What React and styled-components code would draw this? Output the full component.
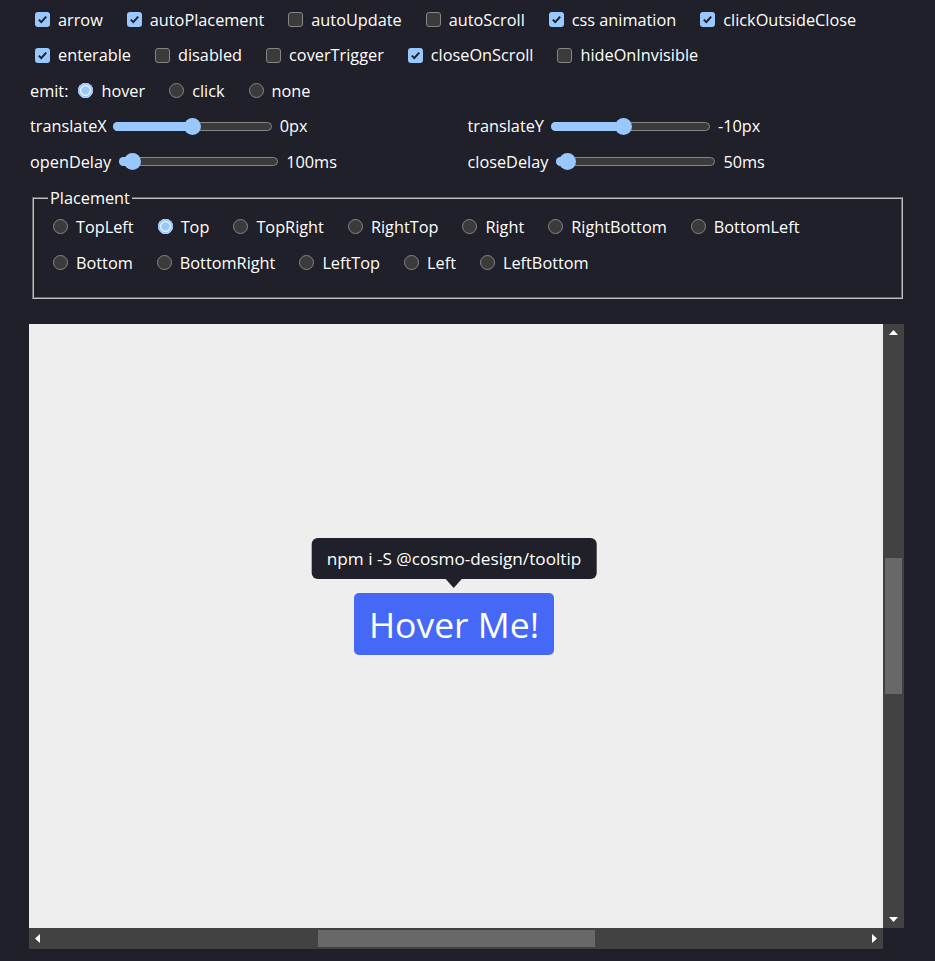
import React from 'react';
import styled, { createGlobalStyle, css } from 'styled-components';

const Global = createGlobalStyle`
  html, body { margin: 0; padding: 0; background: #1f2029; }
  body {
    font-family: "Open Sans", "Noto Sans", sans-serif;
    font-size: 16.3px;
    color: #ffffff;
  }
  * { box-sizing: border-box; }
`;

const Page = styled.div`
  width: 935px;
  height: 961px;
  padding: 2px 30px 0 30px;
  overflow: hidden;
`;

const Row = styled.div`
  display: flex;
  align-items: center;
  height: 35.5px;
  white-space: nowrap;
`;

const SliderGrid = styled.div`
  display: grid;
  grid-template-columns: 1fr 1fr;
`;

const Option = styled.label`
  display: flex;
  align-items: center;
  margin-right: 19px;
  line-height: 22px;
`;

const Box = styled.span`
  width: 15px;
  height: 15px;
  margin: 0 8px 0 5px;
  border-radius: 3px;
  display: inline-flex;
  align-items: center;
  justify-content: center;
  flex: none;
  ${(p) =>
    p.$on
      ? css`background: #99c8ff;`
      : css`background: #3b3b3b; border: 1px solid #858585;`}
`;

const Round = styled.span`
  width: 15px;
  height: 15px;
  margin: 0 8px 0 5px;
  border-radius: 50%;
  flex: none;
  ${(p) =>
    p.$on
      ? css`
          background: #99c8ff;
          box-shadow: inset 0 0 0 2px #99c8ff, inset 0 0 0 3.2px #eef5ff;
        `
      : css`background: #3b3b3b; border: 1px solid #858585;`}
`;

const Caption = styled.span`
  margin-right: ${(p) => p.$mr || 0}px;
  line-height: 22px;
`;

const Check = ({ label, on }) => (
  <Option>
    <Box $on={on}>
      {on && (
        <svg width="11" height="11" viewBox="0 0 11 11">
          <path d="M1.8 5.6 L4.3 8.1 L9.2 2.6" fill="none" stroke="#1e1f24" strokeWidth="2" />
        </svg>
      )}
    </Box>
    {label}
  </Option>
);

const Radio = ({ label, on }) => (
  <Option>
    <Round $on={on} />
    {label}
  </Option>
);

const SliderRow = styled.div`
  display: flex;
  align-items: center;
  height: 35.5px;
`;

const Track = styled.div`
  position: relative;
  width: 159px;
  height: 9px;
  margin: 0 8px 0 ${(p) => p.$ml}px;
  border-radius: 5px;
  background: #3b3b3b;
  border: 1px solid #858585;
`;

const Fill = styled.div`
  border-radius: 5px 0 0 5px;
  background: #99c8ff;
  margin: -1px 0 0 -1px;
  height: 9px;
`;

const Thumb = styled.div`
  position: absolute;
  top: 50%;
  width: 17px;
  height: 17px;
  margin: -8.5px 0 0 -8.5px;
  border-radius: 50%;
  background: #99c8ff;
`;

const Slider = ({ label, value, min, max, unit, ml }) => {
  const c = 8.5 + ((value - min) / (max - min)) * 142;
  return (
    <SliderRow>
      <span>{label}</span>
      <Track $ml={ml}>
        <Fill style={{ width: c }} />
        <Thumb style={{ left: c - 1 }} />
      </Track>
      <span>
        {value}
        {unit}
      </span>
    </SliderRow>
  );
};

const Fieldset = styled.fieldset`
  margin: 7px 2px 0 2px;
  padding: 0 14px 16px 14px;
  border: 2px groove #c0c0c0;
  min-width: 0;
`;

const Legend = styled.legend`
  padding: 0 2px;
  line-height: 22px;
`;

const Wrap = styled.div`
  display: flex;
  flex-wrap: wrap;
  white-space: nowrap;
`;

const WrapItem = styled.div`
  height: 36px;
  display: flex;
  align-items: center;
`;

const Stage = styled.div`
  margin: 25px 0 0 -1px;
  width: 875px;
  display: grid;
  grid-template-columns: 854px 21px;
  grid-template-rows: 604px 21px;
`;

const Viewport = styled.div`
  background: #eeeeee;
  display: flex;
  align-items: center;
  justify-content: center;
  padding: 0 4px 4px 0;
`;

const VBar = styled.div`
  background: #424242;
  display: flex;
  flex-direction: column;
  align-items: center;
`;

const HBar = styled.div`
  background: #424242;
  display: flex;
  align-items: center;
`;

const ArrowCell = styled.div`
  flex: none;
  width: ${(p) => (p.$v ? 21 : 17)}px;
  height: ${(p) => (p.$v ? 17 : 21)}px;
  display: flex;
  align-items: center;
  justify-content: center;
`;

const VThumb = styled.div`
  width: 17px;
  height: 136px;
  margin-top: 217px;
  background: #686868;
`;

const HTrack = styled.div`
  flex: 1;
  height: 21px;
  display: flex;
  align-items: center;
`;

const VTrack = styled.div`
  flex: 1;
  width: 21px;
  display: flex;
  flex-direction: column;
  align-items: center;
`;

const HThumb = styled.div`
  width: 277px;
  height: 17px;
  margin-left: 272px;
  background: #686868;
`;

const Anchor = styled.div`
  position: relative;
`;

const HoverButton = styled.button`
  width: 200px;
  height: 62px;
  border: none;
  border-radius: 5px;
  background: #4568f6;
  color: #ffffff;
  font-family: "Open Sans", "Noto Sans", sans-serif;
  font-size: 35.5px;
  line-height: 62px;
  padding: 0;
`;

const Tip = styled.div`
  position: absolute;
  left: 50%;
  bottom: calc(100% + 14px);
  transform: translateX(-50%);
  height: 41px;
  padding: 0 15px;
  line-height: 41px;
  white-space: nowrap;
  border-radius: 6px;
  background: #1f2029;
  color: #ffffff;
  font-size: 17.2px;
  &::after {
    content: "";
    position: absolute;
    left: 50%;
    top: 100%;
    margin-left: -8px;
    border-left: 8px solid transparent;
    border-right: 8px solid transparent;
    border-top: 9px solid #1f2029;
  }
`;

const Tri = ({ dir }) => {
  const pts = {
    up: '0,5 4.5,0 9,5',
    down: '0,0 9,0 4.5,5',
    left: '5,0 5,9 0,4.5',
    right: '0,0 0,9 5,4.5',
  }[dir];
  const vert = dir === 'up' || dir === 'down';
  return (
    <svg width={vert ? 9 : 5} height={vert ? 5 : 9} viewBox={vert ? '0 0 9 5' : '0 0 5 9'}>
      <polygon points={pts} fill="#ffffff" />
    </svg>
  );
};

const placements = [
  'TopLeft', 'Top', 'TopRight', 'RightTop', 'Right', 'RightBottom',
  'BottomLeft', 'Bottom', 'BottomRight', 'LeftTop', 'Left', 'LeftBottom',
];

export default function App() {
  return (
    <>
      <Global />
      <Page>
        <Row>
          <Check label="arrow" on />
          <Check label="autoPlacement" on />
          <Check label="autoUpdate" />
          <Check label="autoScroll" />
          <Check label="css animation" on />
          <Check label="clickOutsideClose" on />
        </Row>
        <Row>
          <Check label="enterable" on />
          <Check label="disabled" />
          <Check label="coverTrigger" />
          <Check label="closeOnScroll" on />
          <Check label="hideOnInvisible" />
        </Row>
        <Row>
          <Caption $mr={5}>emit:</Caption>
          <Radio label="hover" on />
          <Radio label="click" />
          <Radio label="none" />
        </Row>
        <SliderGrid>
          <Slider label="translateX" value={0} min={-100} max={100} unit="px" ml={6} />
          <Slider label="translateY" value={-10} min={-100} max={100} unit="px" ml={7} />
          <Slider label="openDelay" value={100} min={0} max={3000} unit="ms" ml={8} />
          <Slider label="closeDelay" value={50} min={0} max={3000} unit="ms" ml={8} />
        </SliderGrid>
        <Fieldset>
          <Legend>Placement</Legend>
          <Wrap>
            {placements.map((p) => (
              <WrapItem key={p}>
                <Radio label={p} on={p === 'Top'} />
              </WrapItem>
            ))}
          </Wrap>
        </Fieldset>
        <Stage>
          <Viewport>
            <Anchor>
              <Tip>npm i -S @cosmo-design/tooltip</Tip>
              <HoverButton>Hover Me!</HoverButton>
            </Anchor>
          </Viewport>
          <VBar>
            <ArrowCell $v>
              <Tri dir="up" />
            </ArrowCell>
            <VTrack>
              <VThumb />
            </VTrack>
            <ArrowCell $v>
              <Tri dir="down" />
            </ArrowCell>
          </VBar>
          <HBar>
            <ArrowCell>
              <Tri dir="left" />
            </ArrowCell>
            <HTrack>
              <HThumb />
            </HTrack>
            <ArrowCell>
              <Tri dir="right" />
            </ArrowCell>
          </HBar>
          <div />
        </Stage>
      </Page>
    </>
  );
}
